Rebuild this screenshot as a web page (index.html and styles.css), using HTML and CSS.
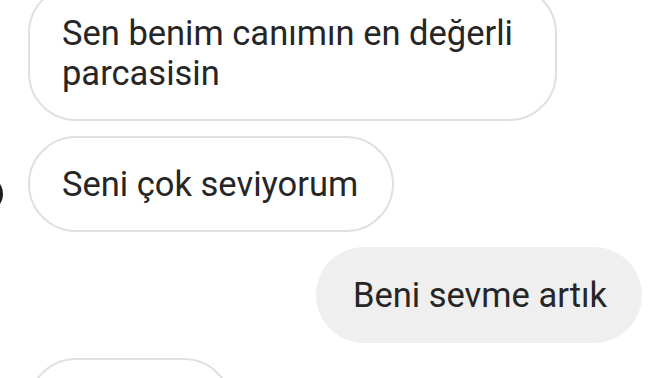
FILE: index.html
```html
<!DOCTYPE html>
<html lang="tr">
<head>
  <meta charset="UTF-8">
  <meta name="viewport" content="width=device-width, initial-scale=1.0">
  <title>Mesajlar</title>
  <link rel="stylesheet" href="styles.css">
</head>
<body>
<main class="thread">
  <div class="row row--in">
    <span class="avatar-slot"></span>
    <p class="bubble">Sen benim canımın en değerli parcasisin</p>
  </div>
  <div class="row row--in">
    <span class="avatar-slot"><span class="avatar"></span></span>
    <p class="bubble">Seni çok seviyorum</p>
  </div>
  <div class="row row--out">
    <p class="bubble bubble--own">Beni sevme artık</p>
  </div>
  <div class="row row--in">
    <span class="avatar-slot"></span>
    <p class="bubble bubble--short"></p>
  </div>
</main>
</body>
</html>
```

FILE: styles.css
```css
* {
  box-sizing: border-box;
}

html, body {
  margin: 0;
  height: 100%;
  overflow: hidden;
  background: #fff;
}

body {
  font-family: Roboto, "Noto Sans", sans-serif;
  font-size: 34.5px;
  line-height: 40px;
  color: #262626;
}

.thread {
  display: flex;
  flex-direction: column;
  gap: 15px;
  margin-top: -15px;
  margin-left: -33px;
  padding-right: 30px;
}

.row {
  display: flex;
  align-items: center;
  gap: 25px;
}

.row--out {
  justify-content: flex-end;
}

.avatar-slot {
  flex: none;
  width: 36px;
  display: flex;
  margin-top: 20px;
}

.avatar {
  width: 36px;
  height: 36px;
  border-radius: 50%;
  background: #1e1e1e;
}

.bubble {
  margin: 0;
  max-width: 529px;
  padding: 26px 34px 26px 32px;
  border: 2px solid #e0e0e0;
  border-radius: 48px;
  background: #fff;
}

.bubble--own {
  padding: 28px 35px 28px 37px;
  border: none;
  background: #efefef;
}

.bubble--short {
  width: 204px;
  height: 96px;
}
```
